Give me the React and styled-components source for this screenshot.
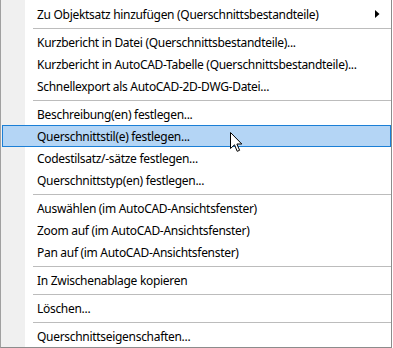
import React from "react";
import styled, { createGlobalStyle } from "styled-components";

const Global = createGlobalStyle`
  html, body { margin: 0; padding: 0; background: #fff; }
  body { font-family: "Noto Sans", "Open Sans", sans-serif; }
`;

const Page = styled.div`
  position: relative;
  width: 393px;
  height: 348px;
  overflow: hidden;
  background: #fff;
`;

const Menu = styled.div`
  box-sizing: border-box;
  width: 392px;
  height: 348px;
  padding-top: 3px;
  display: flex;
  flex-direction: column;
  border-left: 1px solid #a0a0a0;
  border-right: 1px solid #8c8c8c;
  border-bottom: 1px solid #8c8c8c;
  background: linear-gradient(to right, #f0f0f0 0 24px, #ffffff 24px);
  font-family: "Noto Sans", sans-serif;
  font-size: 12px;
  color: #000;
`;

const Item = styled.div`
  box-sizing: border-box;
  height: 22px;
  margin-left: 1px;
  padding-left: 34px;
  display: flex;
  align-items: center;
  justify-content: space-between;
  border: 1px solid ${(p) => (p.$active ? "#1b7fd6" : "transparent")};
  background: ${(p) => (p.$active ? "#b4d5f5" : "transparent")};
  white-space: nowrap;
`;

const Label = styled.span`
  letter-spacing: -0.3px;
`;

const Arrow = styled.svg`
  width: 5px;
  height: 8px;
  margin-right: 10px;
  flex: none;
`;

const Separator = styled.div`
  height: 6px;
  margin-left: 32px;
  display: flex;
  align-items: center;
  &::after {
    content: "";
    display: block;
    height: 1px;
    width: 100%;
    background: #bcbcbc;
  }
`;

const Cursor = styled.svg`
  position: absolute;
  left: 230px;
  top: 132px;
  width: 13px;
  height: 21px;
`;

const groups = [
  [{ t: "Zu Objektsatz hinzufügen (Querschnittsbestandteile)", sub: true }],
  [
    { t: "Kurzbericht in Datei (Querschnittsbestandteile)..." },
    { t: "Kurzbericht in AutoCAD-Tabelle (Querschnittsbestandteile)..." },
    { t: "Schnellexport als AutoCAD-2D-DWG-Datei..." },
  ],
  [
    { t: "Beschreibung(en) festlegen..." },
    { t: "Querschnittstil(e) festlegen...", active: true },
    { t: "Codestilsatz/-sätze festlegen..." },
    { t: "Querschnittstyp(en) festlegen..." },
  ],
  [
    { t: "Auswählen (im AutoCAD-Ansichtsfenster)" },
    { t: "Zoom auf (im AutoCAD-Ansichtsfenster)" },
    { t: "Pan auf (im AutoCAD-Ansichtsfenster)" },
  ],
  [{ t: "In Zwischenablage kopieren" }],
  [{ t: "Löschen..." }],
  [{ t: "Querschnittseigenschaften..." }],
];

export default function App() {
  return (
    <Page>
      <Global />
      <Menu>
        {groups.map((g, gi) => (
          <React.Fragment key={gi}>
            {gi > 0 && <Separator />}
            {g.map((it) => (
              <Item key={it.t} $active={it.active}>
                <Label>{it.t}</Label>
                {it.sub && (
                  <Arrow viewBox="0 0 5 8">
                    <path d="M0 0 L4.5 4 L0 8 Z" fill="#000" />
                  </Arrow>
                )}
              </Item>
            ))}
          </React.Fragment>
        ))}
      </Menu>
      <Cursor viewBox="0 0 13 21">
        <path
          d="M0.5 0.5 L0.5 16.5 L4.5 12.8 L7.2 19.3 L9.6 18.3 L6.9 12 L11.8 12 Z"
          fill="#fff"
          stroke="#000"
          strokeWidth="1"
          strokeLinejoin="miter"
        />
      </Cursor>
    </Page>
  );
}
